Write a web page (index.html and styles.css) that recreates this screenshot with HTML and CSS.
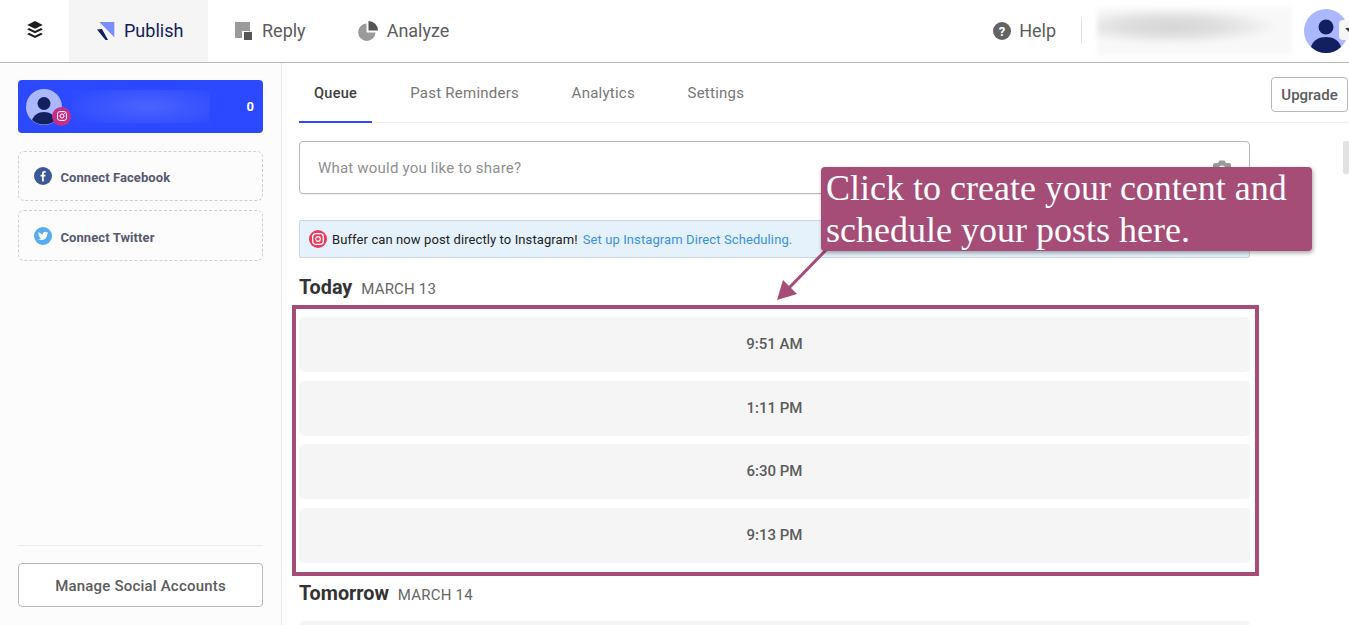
FILE: index.html
```html
<!DOCTYPE html>
<html lang="en">
<head>
<meta charset="utf-8">
<title>Buffer Publish</title>
<link rel="stylesheet" href="styles.css">
</head>
<body>
<header class="topbar">
  <div class="brand">
    <svg width="18" height="18" viewBox="0 0 18 18"><path d="M9 1l7 3.400L9 7.800 2 4.400z" fill="#1c1c1c"/><path d="M3.600 7.300L9 9.900l5.400-2.600L16 8.600 9 12 2 8.600z" fill="#1c1c1c"/><path d="M3.600 11.500L9 14.100l5.400-2.600 1.600 1.300L9 16.200l-7-3.400z" fill="#1c1c1c"/></svg>
  </div>
  <a class="nav-item nav-publish">
    <svg width="18" height="18" viewBox="0 0 18 18"><path d="M2.300 0H17.300V15.300z" fill="#7b8cff"/><path d="M0 7.500L5 7l6 11H8.500z" fill="#12205f"/></svg>
    <span>Publish</span>
  </a>
  <a class="nav-item nav-reply">
    <svg width="18" height="18" viewBox="0 0 18 18"><path d="M0 0h15v9H7v7H0z" fill="#9a9a9a"/><rect x="9" y="10" width="8" height="8" fill="#555"/></svg>
    <span>Reply</span>
  </a>
  <a class="nav-item nav-analyze">
    <svg width="20" height="20" viewBox="0 0 20 20"><path d="M10.500 0a9.500 9.500 0 0 1 9.500 9.500h-9.500z" fill="#555"/><path d="M8.500 2.500V11.500H17.500a8.700 8.700 0 1 1-9-9z" fill="#9a9a9a"/></svg>
    <span>Analyze</span>
  </a>
  <div class="top-right">
    <a class="help">
      <svg width="18" height="18" viewBox="0 0 18 18"><circle cx="9" cy="9" r="9" fill="#636363"/><text x="9" y="13.500" class="help-q">?</text></svg>
      <span>Help</span>
    </a>
    <div class="divider"></div>
    <div class="blur-name"></div>
    <div class="top-avatar">
      <svg width="44" height="44" viewBox="0 0 44 44"><circle cx="22" cy="22" r="22" fill="#abb7ff"/><circle cx="22" cy="18" r="7.500" fill="#12205f"/><path d="M7 38c2-7 8-10 15-10s13 3 15 10a22 22 0 0 1-30 0z" fill="#12205f"/></svg>
      <span class="caret-box"><i class="caret"></i></span>
    </div>
  </div>
</header>

<div class="layout">
  <aside class="sidebar">
    <div class="account-card">
      <div class="account-avatar">
        <svg width="36" height="36" viewBox="0 0 36 36"><circle cx="18" cy="18" r="18" fill="#abb7ff"/><circle cx="18" cy="14.500" r="6.500" fill="#12205f"/><path d="M6 31c2-5 6-8 12-8s10 3 12 8a18 18 0 0 1-24 0z" fill="#12205f"/></svg>
        <span class="ig-badge">
          <svg width="10" height="10" viewBox="0 0 10 10"><rect x="0.600" y="0.600" width="8.800" height="8.800" rx="2.200" fill="none" stroke="#fff" stroke-width="1"/><circle cx="5" cy="5" r="2" fill="none" stroke="#fff" stroke-width="1"/><circle cx="7.500" cy="2.500" r="0.600" fill="#fff"/></svg>
        </span>
      </div>
      <div class="account-blur"></div>
      <span class="account-count">0</span>
    </div>
    <a class="connect">
      <svg width="18" height="18" viewBox="0 0 18 18"><circle cx="9" cy="9" r="9" fill="#3b5998"/><path d="M9.800 14.500V9.600h1.500l.3-1.900H9.800V6.600c0-.6.200-.9.900-.9h.9V4c-.3 0-.8-.1-1.300-.1-1.400 0-2.300.8-2.300 2.400v1.400H6.500v1.900H8v4.900z" fill="#fff"/></svg>
      <span>Connect Facebook</span>
    </a>
    <a class="connect connect-tw">
      <svg width="18" height="18" viewBox="0 0 18 18"><circle cx="9" cy="9" r="9" fill="#55acee"/><path d="M14.200 5.800c-.4.200-.8.300-1.200.3.400-.3.800-.7.900-1.200-.4.200-.9.400-1.300.5a2.100 2.100 0 0 0-3.600 1.900c-1.700-.1-3.300-.9-4.300-2.200-.6 1-.3 2.200.6 2.800-.3 0-.6-.1-.9-.3 0 1 .7 1.900 1.700 2.100-.3.100-.6.100-.9 0 .3.900 1.100 1.400 2 1.500-.9.700-2 1-3.100.9 2.700 1.700 6.200 1.100 8-1.400.8-1.100 1.200-2.400 1.100-3.700.4-.2.700-.6 1-1z" fill="#fff"/></svg>
      <span>Connect Twitter</span>
    </a>
    <div class="sidebar-foot">
      <a class="manage">Manage Social Accounts</a>
    </div>
  </aside>

  <main class="content">
    <nav class="tabs">
      <a class="tab tab-active">Queue</a>
      <a class="tab">Past Reminders</a>
      <a class="tab">Analytics</a>
      <a class="tab">Settings</a>
      <a class="upgrade">Upgrade</a>
    </nav>
    <div class="queue">
      <div class="composer">
        <span>What would you like to share?</span>
        <svg width="18" height="16" viewBox="0 0 18 16"><path d="M2 3h3l1.500-2.500h5L13 3h3a2 2 0 0 1 2 2v9a2 2 0 0 1-2 2H2a2 2 0 0 1-2-2V5a2 2 0 0 1 2-2z" fill="#9a9a9a"/><circle cx="9" cy="9" r="3.500" fill="#fff"/></svg>
      </div>
      <div class="banner">
        <span class="banner-ig">
          <svg width="12" height="12" viewBox="0 0 12 12"><rect x="0.700" y="0.700" width="10.600" height="10.600" rx="3" fill="none" stroke="#fff" stroke-width="1.300"/><circle cx="6" cy="6" r="2.300" fill="none" stroke="#fff" stroke-width="1.200"/></svg>
        </span>
        <span class="banner-text">Buffer can now post directly to Instagram!</span>
        <a class="banner-link">Set up Instagram Direct Scheduling.</a>
      </div>
      <h2 class="day day-today">Today <small>MARCH 13</small></h2>
      <div class="slots">
        <div class="slot">9:51 AM</div>
        <div class="slot">1:11 PM</div>
        <div class="slot">6:30 PM</div>
        <div class="slot">9:13 PM</div>
      </div>
      <h2 class="day day-tomorrow">Tomorrow <small>MARCH 14</small></h2>
      <div class="slot"></div>
    </div>
    <div class="scroll-thumb"></div>
  </main>
</div>

<div class="highlight"></div>
<svg class="arrow" width="60" height="60" viewBox="0 0 60 60"><path d="M55 4L14 46" stroke="#a54c77" stroke-width="3" fill="none"/><path d="M4 56L10 36 24 50z" fill="#a54c77"/></svg>
<div class="callout">Click to create your content and schedule your posts here.</div>
</body>
</html>
```
FILE: styles.css
```css
* { box-sizing: border-box; }
html, body { margin: 0; height: 625px; overflow: hidden; background: #fff; }
body { font-family: Roboto, "Liberation Sans", sans-serif; color: #555; position: relative; }
a { color: inherit; text-decoration: none; }

.topbar { display: flex; align-items: stretch; height: 63px; border-bottom: 1px solid #b8b8b8; background: #fff; }
.brand { width: 69px; display: flex; align-items: center; justify-content: center; }
.brand svg { width: 20px; height: 20px; margin-bottom: 2px; }
.nav-item { display: flex; align-items: center; font-size: 18px; font-weight: 400; color: #5c5c5c; padding-bottom: 1px; }
.nav-publish { width: 139px; background: #f5f5f5; color: #12205f; padding-left: 28px; gap: 9px; }
.nav-reply { padding-left: 27px; gap: 9px; }
.nav-analyze { padding-left: 52px; gap: 9px; }
.top-right { margin-left: auto; display: flex; align-items: center; }
.help { display: flex; align-items: center; gap: 8px; font-size: 18px; color: #5c5c5c; padding-bottom: 1px; }
.help-q { font-family: Roboto, sans-serif; font-size: 13px; font-weight: 700; fill: #fff; text-anchor: middle; }
.divider { width: 1px; height: 26px; background: #e3e3e3; margin-left: 25px; margin-right: 15px; }
.blur-name { width: 195px; height: 48px; background: radial-gradient(ellipse 55% 38% at 38% 40%, #d6d6d6 0%, #dedede 45%, #f8f8f8 100%); filter: blur(2px); }
.top-avatar { position: relative; width: 45px; height: 44px; margin-left: 12px; }
.top-avatar svg { display: block; }
.caret-box { position: absolute; left: 35px; top: 11px; width: 10px; height: 20px; border-radius: 4px 0 0 4px; background: #f6f6f6; display: flex; align-items: center; }
.caret { width: 0; height: 0; border-left: 4px solid transparent; border-right: 4px solid transparent; border-top: 4px solid #333; margin-left: 6px; }

.layout { display: flex; height: 562px; }
.sidebar { width: 282px; flex: none; border-right: 1px solid #ebebeb; background: #fcfcfc; padding: 17px 18px 18px; display: flex; flex-direction: column; }
.account-card { height: 53px; background: #2d49ff; border-radius: 4px; display: flex; align-items: center; padding-left: 8px; padding-right: 9px; color: #fff; }
.account-avatar { position: relative; width: 36px; height: 36px; flex: none; }
.account-avatar svg { display: block; }
.ig-badge { position: absolute; left: 26px; top: 18px; width: 19px; height: 19px; border-radius: 50%; background: #c32f86; display: flex; align-items: center; justify-content: center; }
.account-blur { width: 138px; height: 33px; margin-left: 10px; background: radial-gradient(ellipse 60% 70% at 55% 50%, #4a63ff 0%, #3d57ff 50%, #2f4bff 100%); }
.account-count { margin-left: auto; font-size: 13px; font-weight: 700; }
.connect { height: 50px; margin-top: 18px; border: 1px dashed #cfcfcf; border-radius: 6px; display: flex; align-items: center; padding-left: 15px; gap: 8.500px; font-size: 13px; letter-spacing: 0.08px; font-weight: 700; color: #555a70; }
.connect span { position: relative; top: 1px; }
.connect-tw { margin-top: 9px; height: 51px; }
.connect-tw span { top: 2px; }
.sidebar-foot { margin-top: auto; border-top: 1px solid #ebebeb; padding-top: 17px; }
.manage { display: flex; align-items: center; justify-content: center; height: 44px; border: 1px solid #b8b8b8; border-radius: 4px; background: #fff; font-size: 15px; letter-spacing: 0.2px; font-weight: 500; color: #5c5c5c; padding-top: 2px; }

.content { flex: 1; min-width: 0; height: 562px; overflow: hidden; padding-left: 17px; position: relative; }
.tabs { display: flex; height: 60px; border-bottom: 1px solid #eee; position: relative; align-items: stretch; }
.tab { display: flex; align-items: center; padding: 0 15px; margin-right: 22.500px; font-size: 15px; color: #777; letter-spacing: 0.25px; padding-bottom: 1px; height: 60px; }
.tab-active { color: #3d3d3d; font-weight: 500; font-size: 14.500px; letter-spacing: 0.3px; border-bottom: 2px solid #2d49ff; padding-bottom: 0; padding-top: 3px; margin-right: 23px; }
.upgrade { position: absolute; left: 972px; top: 14px; width: 77px; height: 35px; border: 1px solid #b8b8b8; border-radius: 4px; background: #fff; display: flex; align-items: center; justify-content: center; font-size: 15px; font-weight: 500; color: #5c5c5c; }
.queue { width: 951px; padding-top: 18px; }
.composer { height: 53px; border: 1px solid #b8b8b8; border-radius: 4px; display: flex; align-items: center; justify-content: space-between; padding: 0 18px; font-size: 15px; color: #8f8f8f; letter-spacing: 0.2px; box-shadow: 0 1px 2px rgba(0,0,0,.06); }
.banner { height: 38px; margin-top: 26px; background: #e5f2fc; border: 1px solid #c9d8e6; border-radius: 2px; display: flex; align-items: center; padding-left: 9px; font-size: 13px; letter-spacing: 0.1px; }
.banner-ig { width: 18px; height: 18px; border-radius: 50%; background: #ea3a5f; display: flex; align-items: center; justify-content: center; flex: none; }
.banner-text { color: #222; margin-left: 5px; }
.banner-link { color: #3b8fe8; margin-left: 5px; }
.day { margin: 0; font-size: 19.800px; font-weight: 700; color: #333; line-height: 24px; }
.day small { font-size: 15px; font-weight: 400; color: #666; margin-left: 4px; letter-spacing: 0.2px; }
.day-today { margin-top: 18px; }
.day-tomorrow { margin-top: 19px; }
.slots { display: flex; flex-direction: column; gap: 8.670px; margin-top: 16px; }
.slot { height: 55px; background: #f5f5f5; border-radius: 5px; display: flex; align-items: center; justify-content: center; font-size: 15px; font-weight: 500; color: #5c5c5c; padding-bottom: 1px; }
.day-tomorrow + .slot { margin-top: 14px; }
.scroll-thumb { position: absolute; right: 0; top: 78px; width: 6px; height: 33px; background: #e2e2e2; border-radius: 2px; }

.highlight { position: absolute; left: 292px; top: 305px; width: 967px; height: 271px; border: 4px solid #a54c77; }
.arrow { position: absolute; left: 773px; top: 244px; }
.callout { position: absolute; left: 821px; top: 167px; width: 491px; height: 84px; background: #a54c77; border-radius: 4px; padding: 0 5px; color: #fff; font-family: "Liberation Serif", serif; font-size: 36px; line-height: 42px; box-shadow: 1px 2px 4px rgba(0,0,0,.35); }
```
